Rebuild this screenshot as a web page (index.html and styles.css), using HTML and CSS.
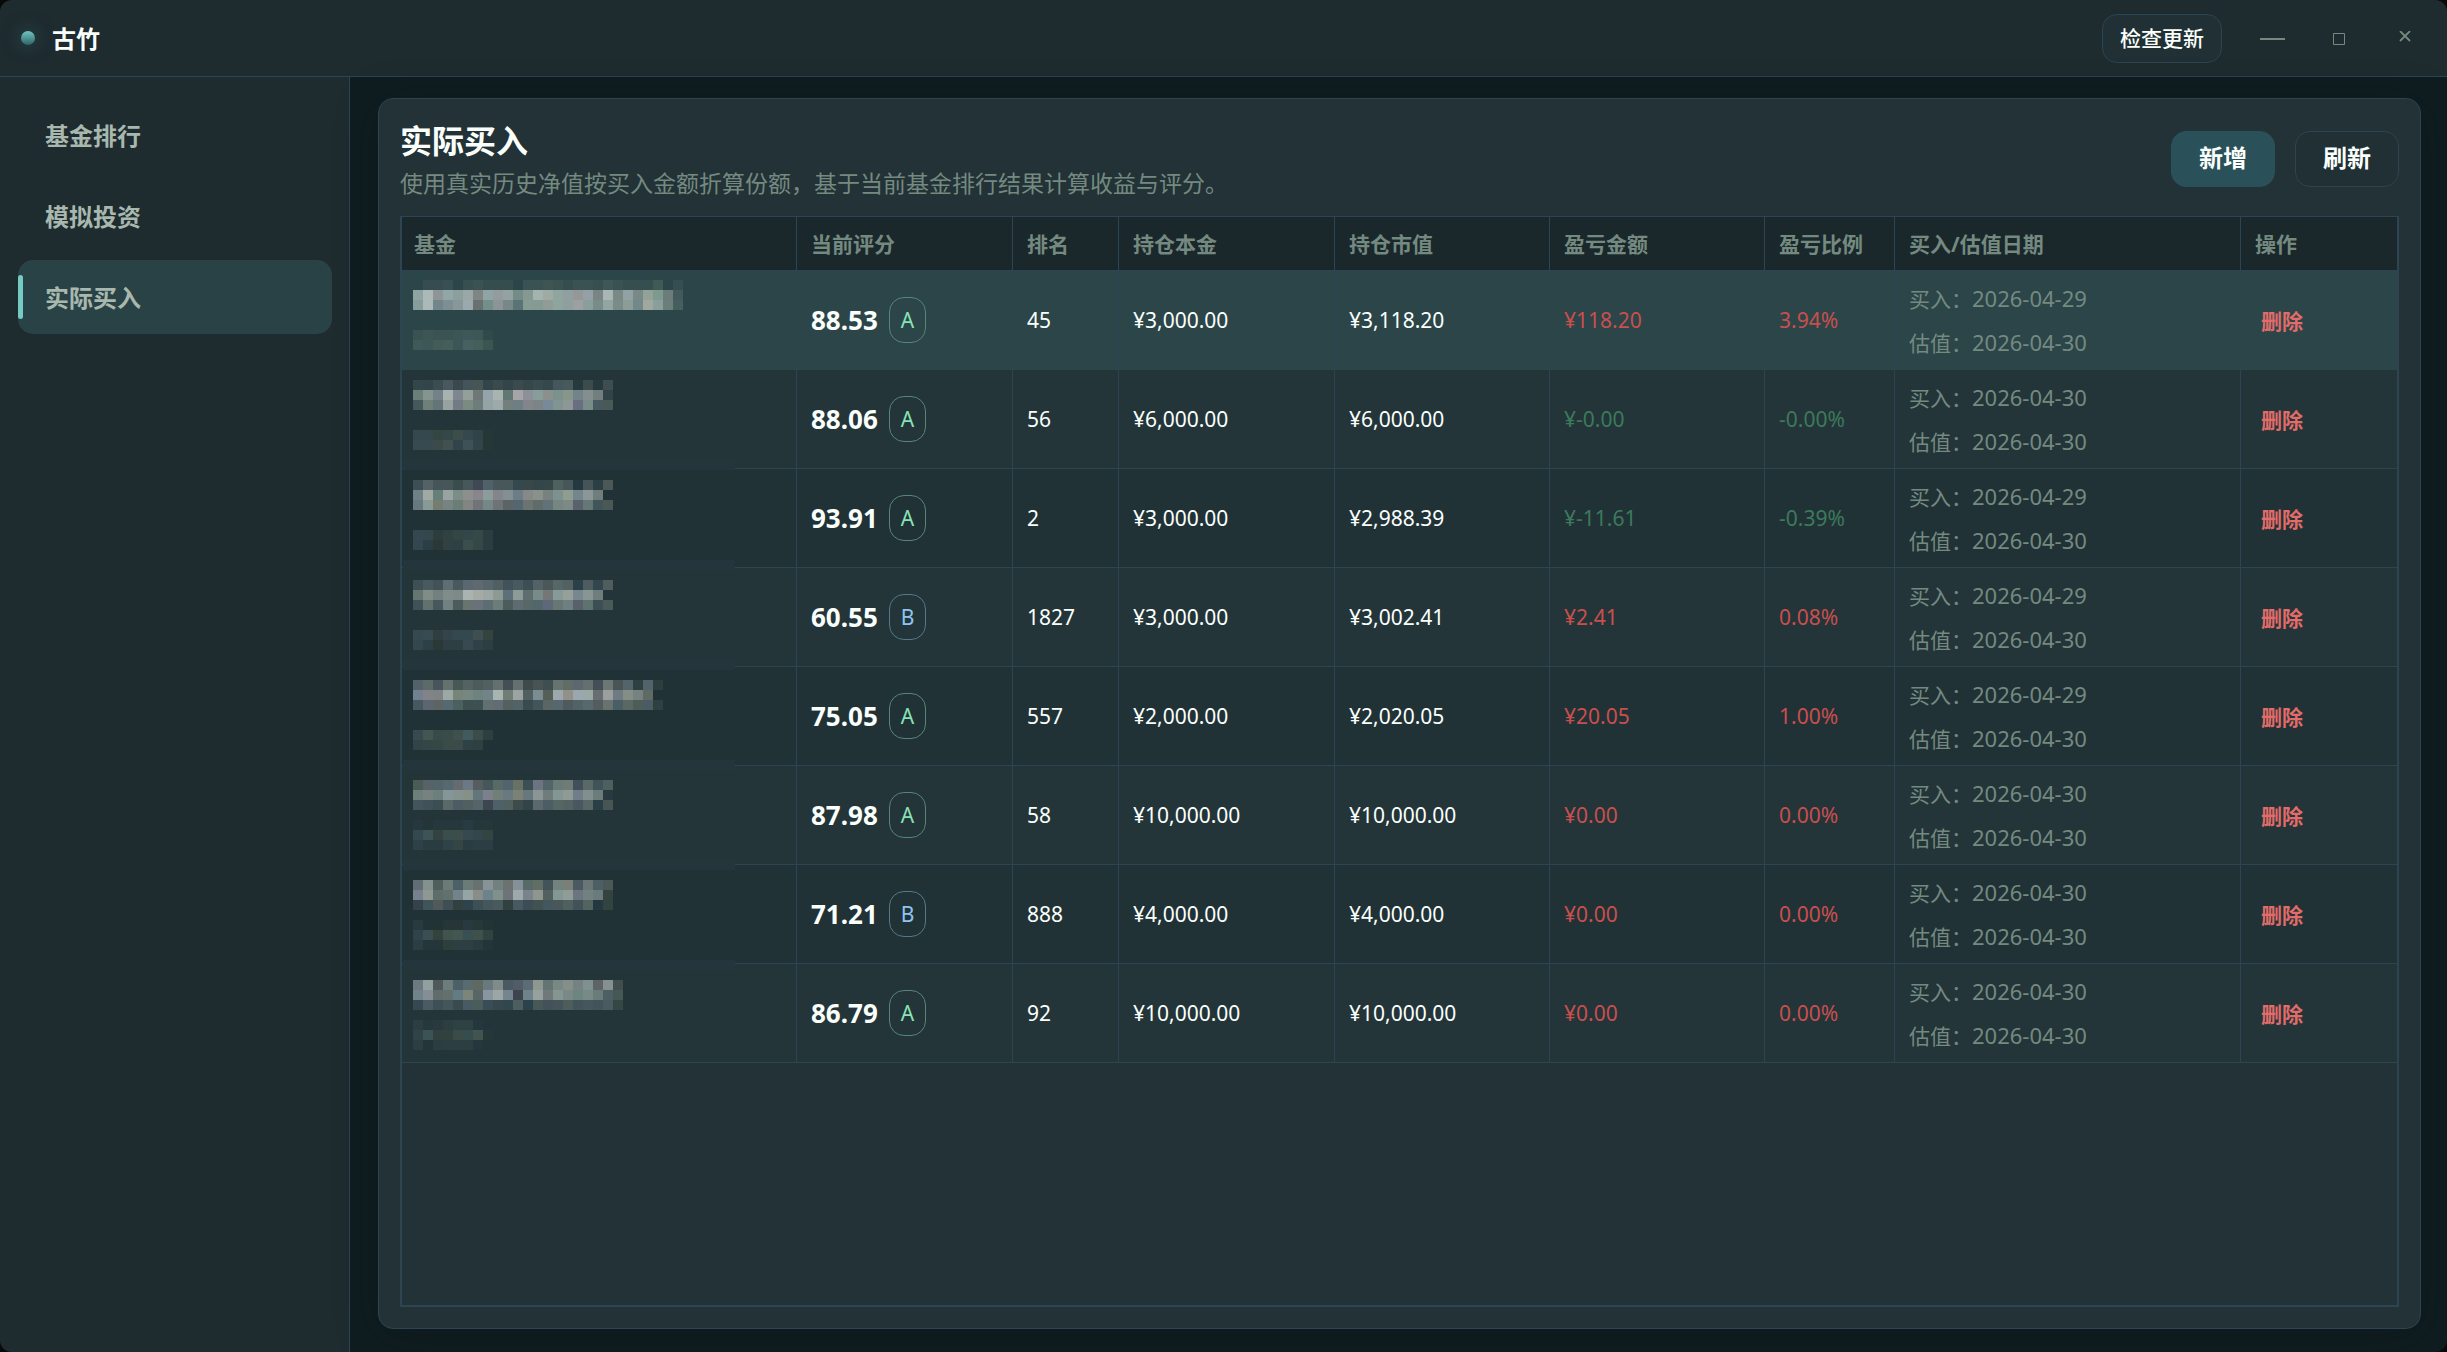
FILE: index.html
```html
<!DOCTYPE html>
<html lang="zh-CN">
<head>
<meta charset="utf-8">
<title>古竹</title>
<link rel="stylesheet" href="styles.css">
</head>
<body>
<div class="window">
  <header class="titlebar">
    <span class="brand-dot"></span>
    <span class="brand">古竹</span>
    <button class="btn btn-small" type="button">检查更新</button>
    <div class="window-controls">
      <button type="button" aria-label="最小化"><svg width="26" height="14" viewBox="0 0 26 14"><path d="M0 8h25" stroke="currentColor" stroke-width="2"/></svg></button>
      <button type="button" aria-label="最大化"><svg width="14" height="14" viewBox="0 0 14 14"><path d="M1.500 2.500h11v11h-11z" fill="none" stroke="currentColor"/></svg></button>
      <button type="button" aria-label="关闭"><svg width="12" height="14" viewBox="0 0 12 14"><path d="M1 0l10 10M11 0l-10 10" fill="none" stroke="currentColor" stroke-width="1.800"/></svg></button>
    </div>
  </header>
  <div class="body">
    <nav class="sidebar">
      <a class="nav-item" href="#rank">基金排行</a>
      <a class="nav-item" href="#simulate">模拟投资</a>
      <a class="nav-item active" href="#actual" aria-current="page">实际买入</a>
    </nav>
    <main class="content">
      <section class="panel">
        <div class="panel-head">
          <div class="panel-text">
            <h1>实际买入</h1>
            <p>使用真实历史净值按买入金额折算份额，基于当前基金排行结果计算收益与评分。</p>
          </div>
          <button class="btn btn-primary" type="button">新增</button>
          <button class="btn" type="button">刷新</button>
        </div>
        <div class="grid">
          <table>
            <colgroup>
              <col><col class="c-score"><col class="c-rank"><col class="c-money"><col class="c-money2"><col class="c-money2"><col class="c-ratio"><col class="c-date"><col class="c-action">
            </colgroup>
            <thead>
              <tr><th>基金</th><th>当前评分</th><th>排名</th><th>持仓本金</th><th>持仓市值</th><th>盈亏金额</th><th>盈亏比例</th><th>买入/估值日期</th><th>操作</th></tr>
            </thead>
            <tbody>
              <tr class="selected"><td class="fund"></td><td><span class="score">88.53</span><span class="badge a">A</span></td><td>45</td><td>¥3,000.00</td><td>¥3,118.20</td><td class="up">¥118.20</td><td class="up">3.94%</td><td class="dates"><div>买入：<time>2026-04-29</time></div><div>估值：<time>2026-04-30</time></div></td><td><button class="remove" type="button">删除</button></td></tr>
              <tr><td class="fund"></td><td><span class="score">88.06</span><span class="badge a">A</span></td><td>56</td><td>¥6,000.00</td><td>¥6,000.00</td><td class="down">¥-0.00</td><td class="down">-0.00%</td><td class="dates"><div>买入：<time>2026-04-30</time></div><div>估值：<time>2026-04-30</time></div></td><td><button class="remove" type="button">删除</button></td></tr>
              <tr><td class="fund"></td><td><span class="score">93.91</span><span class="badge a">A</span></td><td>2</td><td>¥3,000.00</td><td>¥2,988.39</td><td class="down">¥-11.61</td><td class="down">-0.39%</td><td class="dates"><div>买入：<time>2026-04-29</time></div><div>估值：<time>2026-04-30</time></div></td><td><button class="remove" type="button">删除</button></td></tr>
              <tr><td class="fund"></td><td><span class="score">60.55</span><span class="badge b">B</span></td><td>1827</td><td>¥3,000.00</td><td>¥3,002.41</td><td class="up">¥2.41</td><td class="up">0.08%</td><td class="dates"><div>买入：<time>2026-04-29</time></div><div>估值：<time>2026-04-30</time></div></td><td><button class="remove" type="button">删除</button></td></tr>
              <tr><td class="fund"></td><td><span class="score">75.05</span><span class="badge a">A</span></td><td>557</td><td>¥2,000.00</td><td>¥2,020.05</td><td class="up">¥20.05</td><td class="up">1.00%</td><td class="dates"><div>买入：<time>2026-04-29</time></div><div>估值：<time>2026-04-30</time></div></td><td><button class="remove" type="button">删除</button></td></tr>
              <tr><td class="fund"></td><td><span class="score">87.98</span><span class="badge a">A</span></td><td>58</td><td>¥10,000.00</td><td>¥10,000.00</td><td class="up">¥0.00</td><td class="up">0.00%</td><td class="dates"><div>买入：<time>2026-04-30</time></div><div>估值：<time>2026-04-30</time></div></td><td><button class="remove" type="button">删除</button></td></tr>
              <tr><td class="fund"></td><td><span class="score">71.21</span><span class="badge b">B</span></td><td>888</td><td>¥4,000.00</td><td>¥4,000.00</td><td class="up">¥0.00</td><td class="up">0.00%</td><td class="dates"><div>买入：<time>2026-04-30</time></div><div>估值：<time>2026-04-30</time></div></td><td><button class="remove" type="button">删除</button></td></tr>
              <tr><td class="fund"></td><td><span class="score">86.79</span><span class="badge a">A</span></td><td>92</td><td>¥10,000.00</td><td>¥10,000.00</td><td class="up">¥0.00</td><td class="up">0.00%</td><td class="dates"><div>买入：<time>2026-04-30</time></div><div>估值：<time>2026-04-30</time></div></td><td><button class="remove" type="button">删除</button></td></tr>
            </tbody>
          </table>
        </div>
      </section>
    </main>
  </div>
</div>
<script src="mosaic.js"></script>
</body>
</html>
```
FILE: styles.css
```css
* { box-sizing: border-box; }

:root {
  --line: #2d4452;
  --text: #fafffc;
  --muted: #748a80;
  --panel: #223236;
}

html, body { height: 100%; margin: 0; background: #0a0909; }

body, button {
  font-family: "Noto Sans", "Noto Sans CJK SC", sans-serif;
  font-size: 21px;
  color: var(--text);
}

.window {
  min-height: 100%;
  display: flex;
  flex-direction: column;
  border-radius: 12px;
  overflow: hidden;
  background: #101d20;
}

.titlebar {
  height: 77px;
  flex: none;
  display: flex;
  align-items: center;
  padding: 0 9px 0 21px;
  background: #1e2b2f;
  border-bottom: 1px solid var(--line);
}

.brand-dot {
  width: 14px;
  height: 14px;
  border-radius: 50%;
  background: linear-gradient(#70c6c0, #2f6368);
  box-shadow: 0 0 18px #3a7a7a99;
}

.brand {
  margin-left: 17px;
  margin-right: auto;
  padding-bottom: 2px;
  font-size: 24px;
  font-weight: 700;
}

button { cursor: pointer; }

.btn {
  height: 56px;
  padding: 0 27px 2px;
  border: 1px solid var(--line);
  border-radius: 15px;
  background: #203034;
  font-size: 24px;
  font-weight: 600;
  line-height: 32px;
}

.btn-small {
  height: 49px;
  padding: 0 17px;
  font-size: 21px;
  font-weight: 500;
}

.btn-primary { background: #2a5059; border-color: #2a5059; }

.window-controls { display: flex; padding-left: 18px; }

.window-controls button {
  width: 66px;
  height: 48px;
  padding: 0;
  border: 0;
  background: none;
  color: var(--muted);
  display: flex;
  align-items: center;
  justify-content: center;
}

.body { flex: 1; display: flex; }

.sidebar {
  width: 350px;
  flex: none;
  display: flex;
  flex-direction: column;
  gap: 7px;
  padding: 21px 17px 21px 18px;
  background: #1e2b2f;
  border-right: 1px solid var(--line);
}

.nav-item {
  height: 74px;
  display: flex;
  align-items: center;
  padding: 0 0 2px 27px;
  border-radius: 15px;
  color: #a8b8ae;
  font-size: 24px;
  font-weight: 700;
  text-decoration: none;
  position: relative;
}

.nav-item.active { background: #294245; }

.nav-item.active::before {
  content: "";
  position: absolute;
  left: 0;
  top: 15px;
  bottom: 15px;
  width: 5px;
  border-radius: 3px;
  background: #74cbc4;
}

.content { flex: 1; min-width: 0; display: flex; padding: 21px 26px 23px 28px; }

.panel {
  flex: 1;
  min-width: 0;
  display: flex;
  flex-direction: column;
  padding: 21px;
  background: var(--panel);
  border: 1px solid var(--line);
  border-radius: 15px;
  box-shadow: 0 6px 42px #0a131666;
}

.panel-head {
  display: flex;
  align-items: center;
  gap: 20px;
  height: 96px;
  padding-bottom: 18px;
}

.panel-text { flex: 1; padding-top: 6px; }
h1 { margin: 0; font-size: 32px; line-height: 42px; font-weight: 700; }
p { margin: 0; font-size: 23px; line-height: 42px; color: var(--muted); white-space: nowrap; }

.grid {
  flex: 1;
  border: 2px solid var(--line);
  border-top-width: 1px;
}

table { width: 100%; table-layout: fixed; border-collapse: separate; border-spacing: 0; }
.c-score, .c-money { width: 216px; }
.c-rank { width: 106px; }
.c-money2 { width: 215px; }
.c-ratio { width: 130px; }
.c-date { width: 346px; }
.c-action { width: 156px; }

th, td {
  padding: 0 0 0 14px;
  border: solid var(--line);
  border-width: 0 1px 1px 0;
  text-align: left;
  vertical-align: middle;
  white-space: nowrap;
}

th { height: 54px; padding-bottom: 2px; background: #1a272b; color: var(--muted); font-weight: 700; }
th:first-child { padding-left: 12px; }
th:last-child, td:last-child { border-right: 0; }

td { height: 99px; background: #213236; }
tr:nth-child(even) td { background: #233539; }
tr.selected td { background: #2c4549; border-bottom-color: #2c4549; }

.fund { position: relative; padding: 0; }
.mosaic { position: absolute; left: 1px; top: 0; display: block; }

.score { font-size: 26px; font-weight: 700; vertical-align: middle; }

.badge {
  display: inline-block;
  margin-left: 11px;
  padding: 0 11px;
  border: 1px solid;
  border-radius: 15px;
  line-height: 44px;
  vertical-align: middle;
}

.badge.a { color: #88e4b4; border-color: #56857a; }
.badge.b { color: #8fc4f0; border-color: #56788a; }

.up { color: #c94f4e; }
.down { color: #3c7a5b; }
.dates { color: var(--muted); line-height: 44px; }
.dates div { height: 44px; }
.dates time { font-size: 22px; }

.remove {
  padding: 0 6px;
  border: 0;
  background: none;
  color: #e26c69;
  font-weight: 700;
}
```
FILE: mosaic.js
```js
// Privacy mosaic over the fund name and code: 10px tiles, "-" leaves a tile empty.
var NAMES = [
  ["- 364c50 364c50 3a4f52 - 384f51 3a5252 364d50 364d50 364d50 - 3a5252 3a5252 3e5554 3a5252 364d50 3b5254 3b5254 384f51 3f5759 3b5254 374e50 374e50 374e50 405a56 - 374e50",
   "90a3a3 acb9b9 8f9596 90a7a9 8c9f9c 99a8a7 808583 8fa4a4 939b9e 95a2a3 748c87 859992 a3b3ad a0aaa4 8fa59d 929fa0 969799 93a1a7 788584 a8b6b5 788986 91a2a2 788987 93a298 7e998d 6b7c7a 425a5c",
   "879c9c acb9b9 72858a 7e8f94 88979a 9aa9ae 687170 738f8b 8b9597 788787 5a7476 869b92 859a92 909c95 8ea59d 8f9fa0 9ca0a1 8a9f9b 788d8a 94a4a2 7a8c88 8c9c97 72888a a0a99d 8a9f9c 6c7e79 465e5e"],
  ["33474a 33454a 3c4d52 49575e 3b494f 43545a 475555 33454a 3b4a4b 33454a 3a4a4e 36474a 3a4b50 36484c 45575c 495858 26393f 3c4c4d 26393f 3f4d52",
   "6c7e79 849590 738287 a8b3b1 7f8690 939f99 6e7678 95a3aa a9b4b1 627674 a5a4a7 8c9099 889c9a 8b908f 7b918c 87958a 73838a 858e8f 727f7e 314347",
   "45585c 6e8078 637578 97a3a1 717a85 7c8b82 6c7d7b 92a4a3 9da9aa 737f7d 6e7e82 82868a 7c8488 788a97 81948f 8d9797 696f80 788c89 485a60 495957"],
  ["3d4e54 546268 45555a 475759 3b4c4d 47575a 404853 51616a 47575a 47575a 36484f 384849 34464a 36474a 50605f 475759 233840 455457 2c3f45 4c5857",
   "6f8086 a0aaa3 687e78 98a4a0 7c8d87 8c8f8c 88858d 8c9c9b 84848b 848f93 6d7d86 868987 88928a 78817d 7d928e 909b91 75858c 8b9797 6f7e7d -",
   "66797e 889997 747d70 758382 6c7d76 838583 707379 748985 6e7376 5b6364 546771 6b7470 5f6c6a 627279 768681 7c8984 5a616d 657877 405459 4a5856"],
  ["3f5055 495a5f 435257 5f6e74 4a595c 596870 606870 58666b 506061 41525a 4a595f 3c4f55 536267 4a5859 556767 536161 2c4049 4e5c5f 34464d 4f5d5d",
   "64766f 7f8d86 728180 7f8c8a 7d8a89 a9b3b0 a6aaa7 9ca7a5 8d9a92 5d7079 8c9a98 5e6e6f 788b88 747775 869a97 969f98 78868d 879595 6f7d7c -",
   "3e5258 62716d 46585c 718080 4c5c5c 697470 6a717a 5e6c74 6c7c79 4c5c5c 5e6c71 586866 52666b 5f687a 687674 6f7f81 59606c 5e7270 3c4f56 4a5a58"],
  ["53626a 5c6a68 48555c 64716f 485857 526362 4c5c5b 536060 64706f 424f55 64706f 3d4b4d 475453 3e4e51 66736f 5f6d66 5c676f 64706f 434e56 6c7775 485554 54646a 2e4042 52636a 2e3e3e",
   "738090 828388 7e8385 9ca8a5 778479 768781 708280 738489 a7b4b2 6f7d74 9ba4a0 505f5f 7b8c93 555f56 9ca9ac 919089 99a8ae 9ca8a6 686d71 9c9f9e 6c7c82 858d87 75827f 606a64 -",
   "485862 5c666f 5c6464 556a70 4c605f 3e4f4f 3b5152 62706f 636b74 526060 536264 394b51 42555a 5a6663 566770 4f5a5c 536266 56696d 545c60 687370 4c5e65 596864 4e5e57 4a5b61 2f4040"],
  ["4b5c57 566268 53656a 566970 646c6f 6c7886 575c60 46575c 586a66 51646d 687164 3c4f55 6d7380 51656b 6a7b77 6f7b76 3f505a 5b6966 41535a 4e5f5d",
   "6c8079 758280 6d7f7b 869698 859390 859086 64767d 7c808c 727f77 687a80 7c8178 66777e 8a9695 707b7c 829792 8e9a96 717e89 828f8f 6c7c7b 28393f",
   "43555b 3f5257 3c4e53 5a6968 4c5c64 506060 546468 3b464f 4e6069 50605f 3d4c4b 30444a 5b696f 4c5d66 566662 536262 4a5662 566766 2a3f45 475654"],
  ["606d74 84928f 505f5b 6c7a78 4e6067 6b7b78 677270 879398 728180 6c7270 84919a 586a68 606e66 42545a 72837d 7a8078 4b5962 6a7676 4c5f64 4a5956",
   "77808e 8f9890 5d6e6a 64706c 73838b 95a4a5 8a8d87 6c838c 80908a 6e737b 9caaab 78838c 8f9690 52605e 839894 909c98 6c7480 728180 6b7a7a 33433f",
   "36424a 40555a 505a5a 3d4e54 304140 2e444a 3d5056 45575c 4a5a5c 304140 485a61 3e4d55 425250 43575f 485859 506060 425259 53635f 243840 334340"],
  ["6c7980 92a09f 50585a 6c7d7b 4d6067 586b6e 60695f 687a80 808c8a 4a5961 525c66 5b6c74 8d9891 647472 788885 858e88 748281 7f9090 5e6368 859190 404e4e",
   "71838a 858e95 5e6d6c 63706b 627b85 7c8579 586765 8996a0 9ca7a5 758590 3c444d 6e838a 96a09c 70787a 859590 788986 6c8580 788a85 6b7b77 4d5f64 475753",
   "364952 4b5b61 3f4f56 44555b 3b4a4c 485b62 4b5d5b 394d57 36484d 32474d 4d5e5e 2b414b 485857 42515a 455459 4c5d5b 42535a 46565e 42545a 4a5a61 354745"]
];
var CODES = [
  ["3a5252 3d5654 3b5453 3b5453 3c5556 3e5759 3d5756 304a4c", "3f5858 3d5757 445c57 465e5a 3c5556 486062 455e5a 3d5552"],
  ["34484d 34484d 33463f 34484a 3c4d4a 34484d 2f4348 253737", "374a50 364a50 3c4b4a 42514f 30444a 3e5156 30444a 253737"],
  ["36474f 33474d 2d3d3d 304240 344644 33464a 374947 2c3d42", "34464f 2b3e44 2c3838 2f4140 2e4043 3c4e4b 364846 2c3d42"],
  ["35494f 384b50 2f3e3f 33444a 34484f 34484f 3f4e4f 33443f", "34474c 2d4045 2a3836 2d3f42 2d3f44 38494f 2f4248 2d3e42"],
  ["384a50 435651 384a49 3a4c48 3f514f 415a5e 3c4d49 2e3f40", "324447 344645 354846 3b4c48 3b4c48 2f4144 2e4040 -"],
  ["26383d 233539 26383c 26383c 26383c 293b42 25373b 25373b", "34494f 3c5456 324340 3b4e4b 3b4e4b 35494f 33464a 334541", "2e4147 293c42 2a3c40 2e4347 344643 293c42 2c3e43 2c3e43"],
  ["283a40 223337 213335 263636 263636 283a3f 273838 223434", "31434a 3a4e54 33433c 41534f 44564f 385053 40514b 31433f", "2c3e44 25363b 25363b 2d3f3b 2d3f42 2d3f42 2a3b40 24353a"],
  ["2c3e42 26383d 293a3e 2c3e40 2e4143 2e4143 25373e 23343a", "304347 3b5355 304140 30413e 3a4b48 364d4f 42544f 253737", "2c3e42 24353a 2b3d3e 2d3e42 2d3e42 2d3e42 25373e 233539"]
];
var CODE_TOP = [50, 50, 50, 50, 50, 40, 40, 40];

function rect(x, y, w, h, fill) {
  return '<rect x="' + x + '" y="' + y + '" width="' + w + '" height="' + h + '" fill="' + fill + '"/>';
}

function tiles(lines, top) {
  return lines.map(function (line, r) {
    return line.split(" ").map(function (c, i) {
      return c === "-" ? "" : rect(10 + i * 10, top + r * 10, 10, 10, "#" + c);
    }).join("");
  }).join("");
}

document.querySelectorAll(".fund").forEach(function (cell, k) {
  var out = "";
  if (k > 1) out += rect(0, 0, 332, k - 1, "#24363b");
  if (k > 0 && k < 7) out += rect(0, 89 + k, 332, 10 - k, "#24363b");
  out += tiles(NAMES[k], 9 + k) + tiles(CODES[k], 9 + k + CODE_TOP[k]);
  cell.innerHTML = '<svg class="mosaic" width="332" height="99" aria-hidden="true" shape-rendering="crispEdges">' + out + "</svg>";
});
```
